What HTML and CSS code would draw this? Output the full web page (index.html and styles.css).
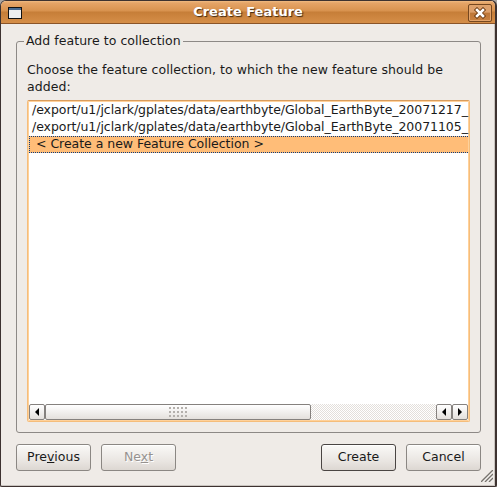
FILE: index.html
```html
<!DOCTYPE html>
<html lang="en">
<head>
<meta charset="utf-8">
<title>Create Feature</title>
<link rel="stylesheet" href="styles.css">
</head>
<body>
<main class="window">
  <header class="titlebar">
    <span class="window-icon"></span>
    <h1 class="title">Create Feature</h1>
    <button class="close" aria-label="Close">
      <svg width="12" height="12" viewBox="0 0 12 12"><path d="M3 3L9 9M9 3L3 9" stroke="#754319" stroke-width="4.5" stroke-linecap="square"/><path d="M3 3L9 9M9 3L3 9" stroke="#fff" stroke-width="2.5" stroke-linecap="square"/></svg>
    </button>
  </header>
  <div class="content">
    <fieldset class="group">
      <legend>Add feature to collection</legend>
      <p class="prompt">Choose the feature collection, to which the new feature should be<br>added:</p>
      <div class="list">
        <ul class="rows">
          <li>/export/u1/jclark/gplates/data/earthbyte/Global_EarthByte_20071217_</li>
          <li>/export/u1/jclark/gplates/data/earthbyte/Global_EarthByte_20071105_</li>
          <li class="selected">&lt; Create a new Feature Collection &gt;</li>
        </ul>
        <div class="scrollbar">
          <span class="arrow"><svg width="4" height="8" viewBox="0 0 4 8"><path d="M4 0V8L0 4Z"/></svg></span>
          <span class="thumb"><span class="grip"></span></span>
          <span class="track"></span>
          <span class="arrow"><svg width="4" height="8" viewBox="0 0 4 8"><path d="M4 0V8L0 4Z"/></svg></span>
          <span class="arrow"><svg width="4" height="8" viewBox="0 0 4 8"><path d="M0 0V8L4 4Z"/></svg></span>
        </div>
      </div>
    </fieldset>
    <footer class="buttons">
      <button class="button">Pre<u>v</u>ious</button>
      <button class="button" disabled>Ne<u>x</u>t</button>
      <span class="spacer"></span>
      <button class="button default">Create</button>
      <button class="button">Cancel</button>
    </footer>
  </div>
  <svg class="resize" width="12" height="12" viewBox="0 0 12 12"><path d="M1 12L12 1M5 12L12 5M9 12L12 9" stroke="#fff" stroke-width="1.2"/><path d="M0 12L12 0M4 12L12 4M8 12L12 8" stroke="#77736d" stroke-width="1.4"/></svg>
</main>
</body>
</html>
```
FILE: styles.css
```css
* { box-sizing: border-box; }
body {
  margin: 0;
  background: #a9a5a1;
  font: 12.5px/16px "DejaVu Sans", sans-serif;
  color: #1a1a1a;
  overflow: hidden;
}
.window {
  position: relative;
  width: 497px;
  height: 487px;
  background: #efebe7;
  border: 1px solid #3d3230;
  border-right-width: 2px;
  border-radius: 6px 6px 2px 2px;
  box-shadow: inset -1px -1px #c9c4bf;
  overflow: hidden;
}
.titlebar {
  display: flex;
  align-items: center;
  height: 23px;
  padding: 0 3px 0 7px;
  background: linear-gradient(#f0bb82 0, #e5a467 2px, #d8924e 10px, #c67e38 11px, #d48d47 21px, #d48d47 22px);
  border-bottom: 1px solid #8a5428;
}
.window-icon {
  width: 14px;
  height: 12px;
  margin-top: 2px;
  background: #eee;
  border: 1px solid #111;
  box-shadow: inset 0 2px #496b91;
}
.title {
  flex: 1;
  margin: 0 0 0 6px;
  font-size: 13px;
  line-height: 20px;
  text-align: center;
  color: #fff;
  text-shadow: 1px 1px 1px #3e2610;
}
.close {
  display: grid;
  place-items: center;
  width: 24px;
  height: 18px;
  margin-top: 1px;
  padding: 0;
  background: linear-gradient(#dda06b 0 45%, #bd7637 50%, #c9813f);
  border: 1px solid #75471f;
  border-radius: 2px;
  box-shadow: inset 0 0 0 1px #e2a36a;
}
.content { padding: 9px 13px 0 15px; }
.group {
  width: 465px;
  height: 400px;
  margin: 0;
  padding: 0 10px;
  border: 1px solid #8d8986;
  border-radius: 3px;
}
legend {
  height: 16px;
  margin-left: -3px;
  padding: 0 2px;
  letter-spacing: 0.04px;
  white-space: nowrap;
}
.prompt {
  margin: 12px 0 5px;
  line-height: 17px;
  letter-spacing: 0.045px;
  white-space: nowrap;
}
.list {
  display: flex;
  flex-direction: column;
  width: 443px;
  height: 322px;
  padding: 1px 0 1px 1px;
  background: #fff;
  border: 1px solid #f5bd7b;
  border-top-color: #d99c5c;
  border-radius: 2px;
  box-shadow: inset 0 0 0 1px #ffd19a;
}
.rows {
  flex: 1;
  width: 439px;
  margin: 0;
  padding: 0;
  list-style: none;
}
.rows li {
  height: 17px;
  padding-left: 3px;
  line-height: 15px;
  letter-spacing: -0.055px;
  white-space: nowrap;
}
.rows .selected {
  padding-left: 6px;
  line-height: 14px;
  letter-spacing: -0.03px;
  background: #ffbd78;
  border: 1px dotted #0a3c80;
  border-right: 0;
}
.scrollbar {
  display: flex;
  width: 439px;
  height: 16px;
}
.arrow, .thumb {
  display: grid;
  place-items: center;
  border: 1px solid #85817e;
  border-radius: 2px;
  background: linear-gradient(#fff, #e4e0dc);
}
.arrow { width: 16px; }
.thumb { width: 266px; }
.grip {
  width: 19px;
  height: 11px;
  background: conic-gradient(from 270deg at 2px 2px, #b4b0ac 90deg, transparent 0) 0 0 / 4px 4px;
}
.track {
  flex: 1;
  background: repeating-conic-gradient(#e3dfdb 0 25%, #fff 0 50%) 0 0 / 2px 2px;
}
.buttons {
  display: flex;
  gap: 10px;
  margin-top: 11px;
  width: 465px;
}
.button {
  width: 75px;
  height: 27px;
  padding: 0 0 1px;
  font: inherit;
  color: #1a1a1a;
  background: linear-gradient(#faf9f7, #e9e5e1 65%, #dcd7d2);
  border: 1px solid #8b8783;
  border-radius: 3px;
  box-shadow: inset 0 1px #fff;
}
.button u { text-underline-offset: 1px; }
.button:disabled { color: #96928f; text-shadow: 1px 1px #fff; }
.default { border-color: #4a4543; }
.spacer { flex: 1; }
.resize {
  position: absolute;
  right: 2px;
  bottom: 4px;
}
```
